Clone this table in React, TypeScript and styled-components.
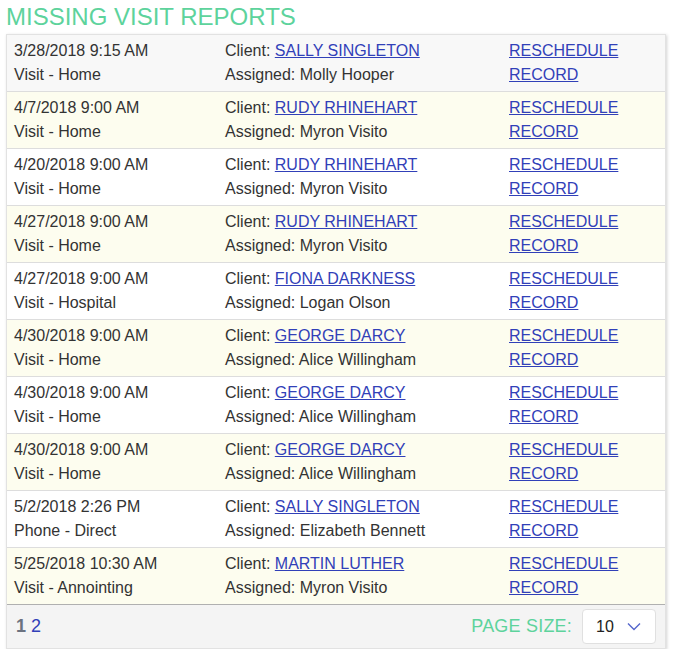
import React from "react";
import styled, { createGlobalStyle } from "styled-components";

const Global = createGlobalStyle`
  html, body { margin: 0; padding: 0; background: #ffffff; }
  body { font-family: "Liberation Sans", Arial, sans-serif; color: #333333; }
`;

const Page = styled.div`
  padding: 4px 15px 0 6px;
  width: 681px;
  box-sizing: border-box;
`;

const Title = styled.h1`
  margin: 0 0 4px 0;
  font-size: 24px;
  line-height: 26px;
  font-weight: normal;
  color: #5dd39c;
`;

const Card = styled.div`
  border: 1px solid #e2e2e2;
  box-shadow: 1px 1px 3px rgba(0, 0, 0, 0.18);
  background: #ffffff;
`;

const Row = styled.div<{ $tone: "gray" | "yellow" | "white" }>`
  display: grid;
  grid-template-columns: 211px 284px 1fr;
  padding: 4px 7px;
  border-bottom: 1px solid #dddddd;
  font-size: 16px;
  line-height: 24px;
  background: ${(p) =>
    p.$tone === "gray" ? "#f8f8f8" : p.$tone === "yellow" ? "#fdfdef" : "#ffffff"};
`;

const Cell = styled.div`
  display: flex;
  flex-direction: column;
  white-space: nowrap;
`;

const Link = styled.a`
  color: #3140b8;
  text-decoration: underline;
  cursor: pointer;
`;

const Footer = styled.div`
  display: flex;
  align-items: center;
  justify-content: space-between;
  height: 43px;
  padding: 0 9px 0 9px;
  margin-top: -1px;
  border-top: 1px solid #b0b0b0;
  background: #f4f4f4;
`;

const Pager = styled.div`
  display: flex;
  gap: 5px;
  font-size: 18px;
`;

const PageNum = styled.span<{ $active?: boolean }>`
  color: ${(p) => (p.$active ? "#6b7280" : "#3140b8")};
  font-weight: ${(p) => (p.$active ? "bold" : "normal")};
`;

const SizeWrap = styled.div`
  display: flex;
  align-items: center;
  gap: 10px;
`;

const SizeLabel = styled.span`
  color: #5dd39c;
  font-size: 18px;
  letter-spacing: 0.2px;
`;

const Select = styled.div`
  display: flex;
  align-items: center;
  justify-content: space-between;
  width: 74px;
  height: 35px;
  box-sizing: border-box;
  padding: 0 14px 0 13px;
  background: #ffffff;
  border: 1px solid #e0e0e0;
  border-radius: 4px;
  font-size: 16px;
  color: #222;
`;

type Item = {
  date: string;
  type: string;
  client: string;
  assigned: string;
};

const items: Item[] = [
  { date: "3/28/2018 9:15 AM", type: "Visit - Home", client: "SALLY SINGLETON", assigned: "Molly Hooper" },
  { date: "4/7/2018 9:00 AM", type: "Visit - Home", client: "RUDY RHINEHART", assigned: "Myron Visito" },
  { date: "4/20/2018 9:00 AM", type: "Visit - Home", client: "RUDY RHINEHART", assigned: "Myron Visito" },
  { date: "4/27/2018 9:00 AM", type: "Visit - Home", client: "RUDY RHINEHART", assigned: "Myron Visito" },
  { date: "4/27/2018 9:00 AM", type: "Visit - Hospital", client: "FIONA DARKNESS", assigned: "Logan Olson" },
  { date: "4/30/2018 9:00 AM", type: "Visit - Home", client: "GEORGE DARCY", assigned: "Alice Willingham" },
  { date: "4/30/2018 9:00 AM", type: "Visit - Home", client: "GEORGE DARCY", assigned: "Alice Willingham" },
  { date: "4/30/2018 9:00 AM", type: "Visit - Home", client: "GEORGE DARCY", assigned: "Alice Willingham" },
  { date: "5/2/2018 2:26 PM", type: "Phone - Direct", client: "SALLY SINGLETON", assigned: "Elizabeth Bennett" },
  { date: "5/25/2018 10:30 AM", type: "Visit - Annointing", client: "MARTIN LUTHER", assigned: "Myron Visito" },
];

const Chevron = () => (
  <svg width="14" height="9" viewBox="0 0 14 9" fill="none">
    <path d="M1 1.5 L7 7.5 L13 1.5" stroke="#5566cc" strokeWidth="1.4" />
  </svg>
);

export default function App() {
  return (
    <Page>
      <Global />
      <Title>MISSING VISIT REPORTS</Title>
      <Card>
        {items.map((it, i) => (
          <Row key={i} $tone={i === 0 ? "gray" : i % 2 === 1 ? "yellow" : "white"}>
            <Cell>
              <span>{it.date}</span>
              <span>{it.type}</span>
            </Cell>
            <Cell>
              <span>
                Client: <Link>{it.client}</Link>
              </span>
              <span>Assigned: {it.assigned}</span>
            </Cell>
            <Cell>
              <span>
                <Link>RESCHEDULE</Link>
              </span>
              <span>
                <Link>RECORD</Link>
              </span>
            </Cell>
          </Row>
        ))}
        <Footer>
          <Pager>
            <PageNum $active>1</PageNum>
            <PageNum>2</PageNum>
          </Pager>
          <SizeWrap>
            <SizeLabel>PAGE SIZE:</SizeLabel>
            <Select>
              <span>10</span>
              <Chevron />
            </Select>
          </SizeWrap>
        </Footer>
      </Card>
    </Page>
  );
}
